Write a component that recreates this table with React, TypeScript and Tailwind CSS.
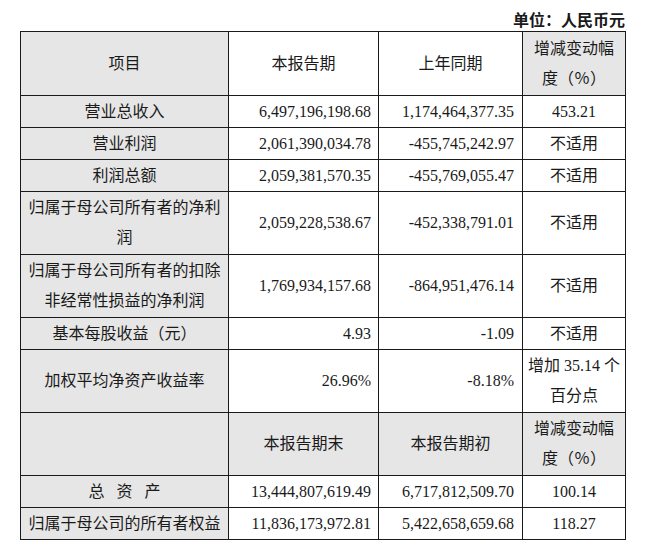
const rows: Array<{ name: string[]; cur: string; prev: string; chg: string[]; tall?: boolean }> = [
  { name: ["营业总收入"], cur: "6,497,196,198.68", prev: "1,174,464,377.35", chg: ["453.21"] },
  { name: ["营业利润"], cur: "2,061,390,034.78", prev: "-455,745,242.97", chg: ["不适用"] },
  { name: ["利润总额"], cur: "2,059,381,570.35", prev: "-455,769,055.47", chg: ["不适用"] },
  {
    name: ["归属于母公司所有者的净利", "润"],
    cur: "2,059,228,538.67",
    prev: "-452,338,791.01",
    chg: ["不适用"],
    tall: true,
  },
  {
    name: ["归属于母公司所有者的扣除", "非经常性损益的净利润"],
    cur: "1,769,934,157.68",
    prev: "-864,951,476.14",
    chg: ["不适用"],
    tall: true,
  },
  { name: ["基本每股收益（元）"], cur: "4.93", prev: "-1.09", chg: ["不适用"] },
  {
    name: ["加权平均净资产收益率"],
    cur: "26.96%",
    prev: "-8.18%",
    chg: ["增加 35.14 个", "百分点"],
    tall: true,
  },
];

const bottom = [
  { name: "总 资 产", cur: "13,444,807,619.49", prev: "6,717,812,509.70", chg: "100.14" },
  { name: "归属于母公司的所有者权益", cur: "11,836,173,972.81", prev: "5,422,658,659.68", chg: "118.27" },
];

const cell = "border border-[#1a1a1a] align-middle";
const lines = (l: string[]) =>
  l.map((t, i) => (
    <span key={i}>
      {i > 0 && <br />}
      {t}
    </span>
  ));

export default function App() {
  return (
    <div
      className="w-[647px] h-[548px] bg-white text-[#1a1a1a] text-[16px]"
      style={{ fontFamily: '"Liberation Serif", "Noto Sans CJK SC", serif' }}
    >
      <div className="w-[625px] pt-[11px] text-right font-bold leading-5">单位：人民币元</div>
      <table className="ml-[20px] mt-0 border-collapse table-fixed w-[605px] leading-[30px]">
        <colgroup>
          <col className="w-[208px]" />
          <col className="w-[150px]" />
          <col className="w-[144px]" />
          <col className="w-[103px]" />
        </colgroup>
        <tbody>
          <tr className="h-[64px] bg-[#e6e6e6] text-center">
            <td className={cell}>项目</td>
            <td className={cell + " bg-white"}>本报告期</td>
            <td className={cell + " bg-white"}>上年同期</td>
            <td className={cell}>
              增减变动幅
              <br />
              度（％）
            </td>
          </tr>
          {rows.map((r, i) => (
            <tr key={i} className={r.tall ? "h-[63px]" : "h-[32px]"}>
              <td className={cell + " bg-[#e6e6e6] text-center"}>{lines(r.name)}</td>
              <td className={cell + " text-right pr-[7px]"}>{r.cur}</td>
              <td className={cell + " text-right pr-[8px]"}>{r.prev}</td>
              <td className={cell + " text-center"}>{lines(r.chg)}</td>
            </tr>
          ))}
          <tr className="h-[63px] bg-[#e6e6e6] text-center">
            <td className={cell}></td>
            <td className={cell}>本报告期末</td>
            <td className={cell}>本报告期初</td>
            <td className={cell}>
              增减变动幅
              <br />
              度（％）
            </td>
          </tr>
          {bottom.map((r, i) => (
            <tr key={i} className="h-[32px]">
              <td className={cell + " bg-[#e6e6e6] text-center [word-spacing:8px]"}>{r.name}</td>
              <td className={cell + " text-right pr-[7px]"}>{r.cur}</td>
              <td className={cell + " text-right pr-[8px]"}>{r.prev}</td>
              <td className={cell + " text-center"}>{r.chg}</td>
            </tr>
          ))}
        </tbody>
      </table>
    </div>
  );
}
